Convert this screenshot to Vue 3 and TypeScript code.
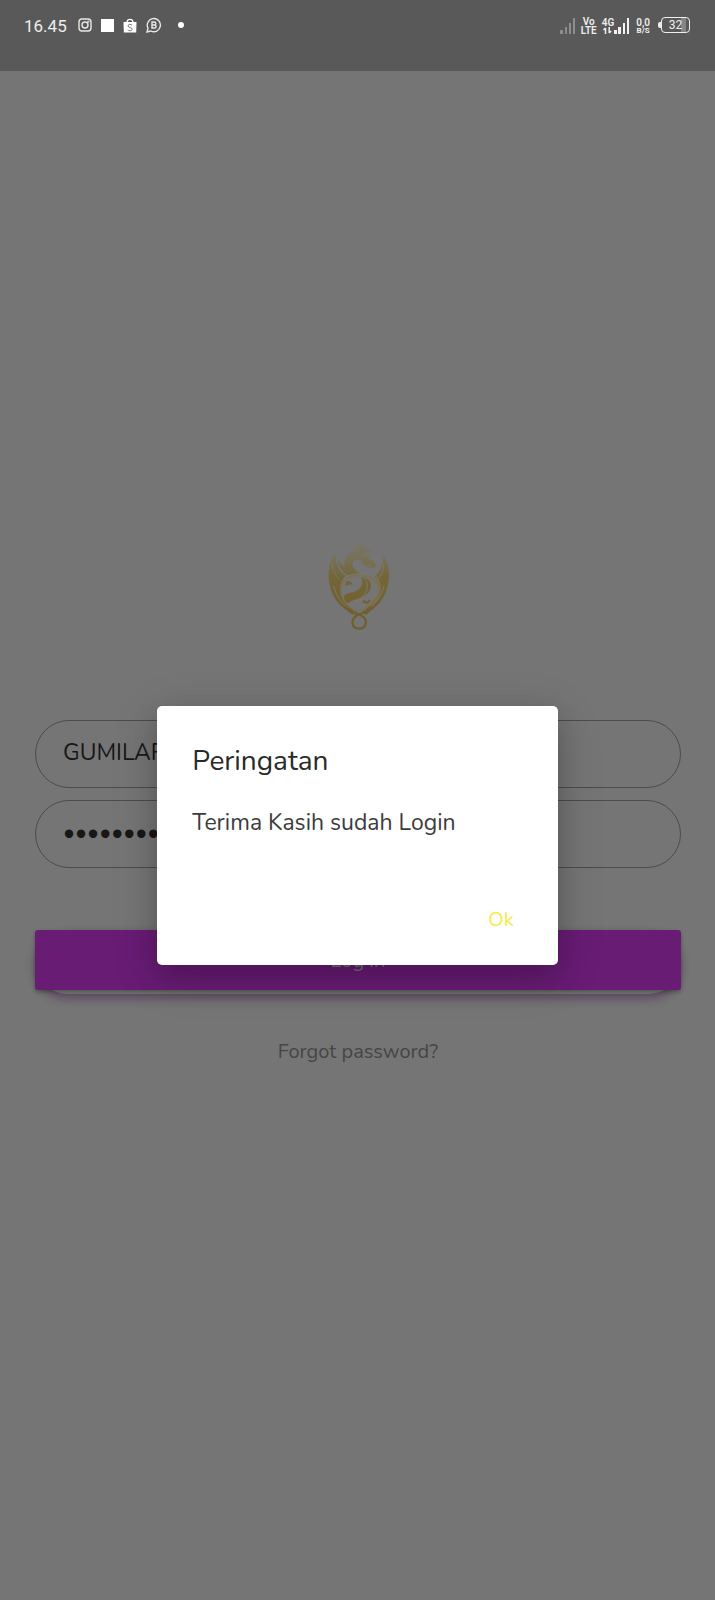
<script setup lang="ts">
import { ref } from 'vue'

const username = ref('GUMILAR')
const password = ref('gumilar12')
const showDialog = ref(true)
</script>

<template>
  <div class="screen">
    <header class="status">
      <time class="clock">16.45</time>
      <div class="notices">
        <svg width="14" height="14" viewBox="0 0 14 14" fill="none" stroke="#e6e6e6" stroke-width="1.4" aria-label="Instagram">
          <rect x="1" y="1" width="12" height="12" rx="3" />
          <circle cx="7" cy="7" r="3" />
          <circle cx="10.4" cy="3.6" r=".4" />
        </svg>
        <span class="square"></span>
        <svg width="14" height="15" viewBox="0 0 14 15" aria-label="Shopee">
          <path d="M.5 4h13l-.3 10.500H.8z" fill="#fff" />
          <path d="M4 4.5C4 .2 10 .2 10 4.5" fill="none" stroke="#fff" stroke-width="1.3" />
          <path d="M9 7.2C8 6 5 6 5 7.9c0 2 4.200 1.300 4.200 3.300 0 2-3.400 2-4.500.6" fill="none" stroke="#777" stroke-width="1" />
        </svg>
        <svg width="16" height="16" viewBox="0 0 16 16" fill="none" stroke="#e6e6e6" stroke-width="1.4" aria-label="WhatsApp Business">
          <path d="M1 15l1-3.800A6.600 6.600 0 1 1 4.800 14z" />
          <path d="M6 5v6h2.600a1.500 1.500 0 0 0 0-3H6h2.300a1.400 1.400 0 0 0 0-3z" />
        </svg>
        <span class="dot"></span>
      </div>
      <div class="system">
        <svg width="16" height="16" viewBox="0 0 16 16" fill="#8c8c8c" aria-label="SIM 1">
          <path d="M0 12h3v4H0zM5 9h2v7H5zM9 5h2v11H9zM13 0h2v16h-2z" />
        </svg>
        <span class="stack"><b>Vo</b><b>LTE</b></span>
        <span class="mobile">
          <span class="stack">
            <b>4G</b>
            <svg width="9" height="7" viewBox="0 0 9 7" fill="none" stroke="#eee" stroke-width="1.500">
              <path d="M2.500 7V1M.5 3L2.500 1M6.200 0v6M8.200 4L6.200 6" />
            </svg>
          </span>
          <svg width="16" height="16" viewBox="0 0 16 16" fill="#f2f2f2" aria-label="SIM 2">
            <path d="M0 12h3v4H0zM4 9h3v7H4zM9 5h2v11H9zM13 0h2v16h-2z" />
          </svg>
        </span>
        <span class="stack speed"><b>0,0</b><small>B/S</small></span>
        <span class="battery">32</span>
      </div>
    </header>

    <main class="body">
      <form class="login" @submit.prevent="showDialog = true">
        <svg class="logo" viewBox="0 0 285 345" aria-label="Dragon emblem">
          <defs>
            <linearGradient id="gold" gradientUnits="userSpaceOnUse" x1="0" y1="40" x2="0" y2="310">
              <stop offset="0" stop-color="#77766e" />
              <stop offset=".22" stop-color="#777157" />
              <stop offset=".42" stop-color="#74663a" />
              <stop offset="1" stop-color="#6f5d2b" />
            </linearGradient>
          </defs>
          <g fill="url(#gold)">
            <path d="M74 82C60 99 53 122 53 152 53 191 68 224 95 247L124 269 137 262C107 242 88 217 88 190 88 174 94 161 104 152L88 138C77 122 72 104 74 82Z" />
            <path d="M213 84C227 99 234 125 234 153 233 190 220 222 193 246L166 269 152 262C183 242 204 215 204 189 204 174 199 163 191 155L205 139C216 121 218 103 213 84Z" />
            <path d="M130 79C110 83 97 98 102 123 90 120 84 110 80 98 80 124 94 144 112 151 124 145 136 143 150 146 133 138 122 126 125 113 130 101 145 99 153 110 159 122 172 127 187 130L194 124 190 111 177 101 168 88 154 79 178 81 190 73 164 70 151 57 143 34 145 61 122 69Z" />
            <path d="M151 157C169 158 182 170 180 185 176 203 160 216 140 222 124 226 112 232 106 239 96 230 95 218 102 210 111 202 127 204 140 196 154 187 157 174 151 157Z" />
            <path d="M104 171C112 164 122 171 126 179 117 177 109 180 103 185Z" />
            <path d="M152 232L159 224 168 230 175 222 179 229 169 237Z" />
          </g>
          <g fill="none" stroke="#7d7869" stroke-width="3" stroke-linecap="round">
            <path d="M69 184C74 211 89 232 117 254M219 182C214 210 199 231 173 253" />
            <path d="M64 116C64 135 73 151 84 161M219 116C217 139 211 151 202 161" />
            <path d="M108 237C126 230 169 221 169 183 169 172 165 165 160 160" />
            <path d="M155 91L167 94 180 105M170 119L185 126" />
          </g>
          <g fill="none" stroke="#7d7250" stroke-width="5" stroke-linecap="round">
            <path d="M141 262C104 242 88 219 90 190 92 165 117 150 148 151 180 152 203 169 203 194 202 220 178 240 150 258" />
            <path d="M194 151C216 181 209 219 181 243" />
          </g>
          <path d="M104 247C119 263 139 266 152 272 171 283 168 311 145 311 122 311 119 286 135 273 149 263 169 263 184 247" fill="none" stroke="#705f31" stroke-width="7" stroke-linecap="round" />
        </svg>
        <div class="fields">
          <input v-model="username" class="field" type="text" aria-label="Username" />
          <input v-model="password" class="field" type="password" aria-label="Password" />
        </div>
        <div class="action">
          <button class="submit" type="submit">Log in</button>
        </div>
        <a class="forgot" href="#forgot">Forgot password?</a>
      </form>

      <div v-if="showDialog" class="overlay">
        <section class="dialog" role="alertdialog" aria-labelledby="dialog-title" aria-describedby="dialog-text">
          <h1 id="dialog-title">Peringatan</h1>
          <p id="dialog-text">Terima Kasih sudah Login</p>
          <button class="ok" type="button" @click="showDialog = false">Ok</button>
        </section>
      </div>
    </main>
  </div>
</template>

<style>
body {
  margin: 0;
  background: #757575;
}
</style>

<style scoped>
.screen {
  display: flex;
  flex-direction: column;
  min-height: 100vh;
  background: #757575;
  font-family: Nunito, "Open Sans", "Noto Sans", sans-serif;
}
.screen * {
  box-sizing: border-box;
}
.status {
  display: flex;
  align-items: flex-start;
  height: 71px;
  padding: 16px 23px 0 24px;
  background: #595959;
  color: #eee;
  font-family: Roboto, sans-serif;
}
.clock {
  font-size: 17px;
  line-height: 20px;
}
.notices {
  display: flex;
  align-items: center;
  gap: 9px;
  height: 18px;
  margin-left: 11px;
}
.square {
  width: 13px;
  height: 13px;
  background: #fff;
}
.dot {
  width: 6px;
  height: 6px;
  margin-left: 7px;
  border-radius: 50%;
  background: #fff;
}
.system {
  display: flex;
  align-items: center;
  gap: 5px;
  height: 20px;
  margin-left: auto;
}
.stack {
  display: flex;
  flex-direction: column;
  align-items: center;
  font-size: 10px;
  line-height: 9px;
}
.stack b {
  font-weight: 600;
}
.mobile {
  display: flex;
  align-items: center;
}
.speed {
  margin-left: 1px;
}
.speed small {
  font-size: 8px;
  line-height: 8px;
  font-weight: 700;
}
.battery {
  position: relative;
  width: 29px;
  height: 16px;
  margin: 0 2px 3px 6px;
  border: 1px solid #eee;
  border-radius: 4px;
  background: linear-gradient(90deg, #595959 70%, #858585 70%, #858585 90%, #595959 90%);
  font-size: 12px;
  line-height: 14px;
  text-align: center;
}
.battery::before {
  content: "";
  position: absolute;
  top: 4px;
  left: -4px;
  width: 3px;
  height: 6px;
  border-radius: 2px 0 0 2px;
  background: #eee;
}
.body {
  position: relative;
  flex: 1;
}
.login {
  display: flex;
  flex-direction: column;
  align-items: center;
  padding: 454px 34px 0 35px;
}
.logo {
  width: 95px;
  height: 115px;
}
.fields {
  display: flex;
  flex-direction: column;
  gap: 12px;
  width: 100%;
  margin-top: 80px;
}
.field {
  width: 100%;
  height: 68px;
  padding: 0 27px 4px;
  border: 1px solid #4c4c4c;
  border-radius: 34px;
  outline: none;
  background: transparent;
  color: #171717;
  font-family: inherit;
  font-size: 23px;
}
.action {
  width: 100%;
  height: 64px;
  margin-top: 62px;
  border-radius: 34px;
  box-shadow: 0 5px 10px rgba(70, 20, 80, 0.45);
}
.submit {
  display: block;
  width: 100%;
  height: 60px;
  padding: 0;
  border: 0;
  border-radius: 3px;
  background: #681c74;
  box-shadow: 0 2px 4px rgba(0, 0, 0, 0.3);
  color: #757575;
  font-family: inherit;
  font-size: 20px;
}
.forgot {
  margin-top: 46px;
  color: #454545;
  font-size: 20px;
  line-height: 24px;
  text-decoration: none;
}
.overlay {
  position: absolute;
  inset: 0;
  display: flex;
  align-items: center;
  justify-content: center;
}
.dialog {
  display: flex;
  flex-direction: column;
  width: 56%;
  min-height: 259px;
  padding: 37px 36px 28px 35px;
  border-radius: 5px;
  background: #fff;
  box-shadow: 0 12px 24px rgba(0, 0, 0, 0.16), 0 10px 48px rgba(0, 0, 0, 0.16);
}
h1 {
  margin: 0;
  color: #2a2a2a;
  font-size: 28px;
  font-weight: 400;
  line-height: 36px;
}
p {
  margin: 28px 0 0;
  color: #3c3c3c;
  font-size: 23px;
  line-height: 32px;
  white-space: nowrap;
}
.ok {
  align-self: flex-end;
  margin-top: auto;
  padding: 4px 8px;
  border: 0;
  background: transparent;
  color: #f7e94c;
  font-family: inherit;
  font-size: 20px;
  line-height: 26px;
}
</style>
